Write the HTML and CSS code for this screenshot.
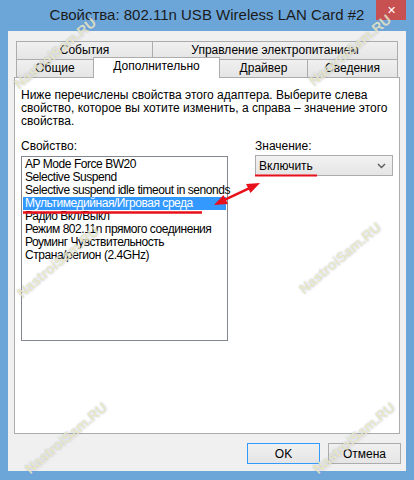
FILE: index.html
```html
<!DOCTYPE html>
<html>
<head>
    <title>Свойства: 802.11n USB Wireless LAN Card #2</title>
    <link rel="stylesheet" href="styles.css">
</head>
<body>
    <div class="window">
        <!-- Title bar -->
        <div class="titlebar">
            <span class="title">Свойства: 802.11n USB Wireless LAN Card #2</span>
            <span class="close">✕</span>
        </div>

        <div class="client">
            <!-- Tabs -->
            <div class="tabs">
                <div class="tab-row">
                    <div class="tab tab-events">События</div>
                    <div class="tab tab-power">Управление электропитанием</div>
                </div>
                <div class="tab-row front">
                    <div class="tab tab-general">Общие</div>
                    <div class="tab tab-advanced selected">Дополнительно</div>
                    <div class="tab tab-driver">Драйвер</div>
                    <div class="tab tab-info">Сведения</div>
                </div>
            </div>

            <div class="panel">
                <p class="intro">Ниже перечислены свойства этого адаптера. Выберите слева<br>свойство, которое вы хотите изменить, а справа – значение этого<br>свойства.</p>

                <div class="fields">
                    <div class="col-left">
                        <div class="label">Свойство:</div>
                        <div class="listbox">
                            <div class="item">AP Mode Force BW20</div>
                            <div class="item">Selective Suspend</div>
                            <div class="item">Selective suspend idle timeout in senonds</div>
                            <div class="item selected">Мультимедийная/Игровая среда</div>
                            <div class="item">Радио Вкл/Выкл</div>
                            <div class="item">Режим 802.11n прямого соединения</div>
                            <div class="item">Роуминг Чувствительность</div>
                            <div class="item">Страна/регион (2.4GHz)</div>
                        </div>
                    </div>
                    <div class="col-right">
                        <div class="label">Значение:</div>
                        <div class="dropdown">
                            <span>Включить</span>
                            <svg class="chevron" width="9" height="6" viewBox="0 0 9 6">
                                <polyline points="1,1 4.5,4.5 8,1" fill="none" stroke="#5a5a5a" stroke-width="1.4"/>
                            </svg>
                        </div>
                    </div>
                </div>
            </div>

            <div class="buttons">
                <button class="default">OK</button>
                <button>Отмена</button>
            </div>
        </div>

        <!-- red annotations drawn on top of the dialog -->
        <svg class="marks" width="414" height="480" viewBox="0 0 414 480">
            <line x1="23" y1="212.5" x2="202" y2="212.5" stroke="#e8101a" stroke-width="2.5"/>
            <line x1="255" y1="175.5" x2="317" y2="175.5" stroke="#e8101a" stroke-width="2"/>
            <line x1="225" y1="199.7" x2="249" y2="188.3" stroke="#e8101a" stroke-width="2.5"/>
            <polygon points="214,205 227.9,203.9 223.5,194.9" fill="#e8101a"/>
            <polygon points="260,183 250.5,193.1 246.1,184.1" fill="#e8101a"/>
        </svg>

        <!-- watermark -->
        <span class="wm wm-1">NastroiSam.RU</span>
        <span class="wm wm-2">NastroiSam.RU</span>
        <span class="wm wm-3">NastroiSam.RU</span>
        <span class="wm wm-4">NastroiSam.RU</span>
        <span class="wm wm-5">NastroiSam.RU</span>
        <span class="wm wm-6">NastroiSam.RU</span>
    </div>
</body>
</html>
```

FILE: styles.css
```css
body {
    margin: 0;
    background: #6ca6d9;
    font-family: "Liberation Sans", Arial, sans-serif;
    font-size: 12px;
    color: #000;
}

.window {
    position: relative;
    width: 414px;
    height: 480px;
    box-sizing: border-box;
    padding: 0 8px 9px;
    background: #6ca6d9;
    overflow: hidden;
}

.titlebar {
    display: flex;
    align-items: flex-start;
    height: 31px;
}

.title {
    flex: 1;
    padding-left: 30px;
    text-align: center;
    font-size: 15px;
    line-height: 30px;
    color: #1b1b1b;
}

.close {
    width: 30px;
    height: 20px;
    background: #c75050;
    color: #fff;
    font-size: 11px;
    line-height: 20px;
    text-align: center;
}

.client {
    background: #f0f0f0;
    height: 440px;
    box-sizing: border-box;
    padding: 10px 6px 7px;
}

/* tabs */
.tabs {
    margin: 0 2px;
}

.tab-row {
    display: flex;
    height: 19px;
}

.tab-row.front {
    margin-top: -1px;
}

.tab {
    box-sizing: border-box;
    height: 19px;
    border: 1px solid #acacac;
    background: linear-gradient(#f0f0f0, #e5e5e5);
    text-align: center;
    line-height: 17px;
    margin-left: -1px;
}

.tab:first-child {
    margin-left: 0;
}

.tab-events { width: 137px; }
.tab-power { flex: 1; }
.tab-general { width: 78px; }
.tab-advanced { width: 127px; }
.tab-driver { width: 89px; }
.tab-info { flex: 1; }

.tab.selected {
    position: relative;
    z-index: 1;
    height: 21px;
    margin-top: -2px;
    background: #fff;
    border-bottom: none;
    line-height: 17px;
}

.panel {
    margin-top: -1px;
    height: 357px;
    box-sizing: border-box;
    border: 1px solid #acacac;
    background: #fff;
    padding: 11px 6px;
}

.intro {
    margin: 0;
    line-height: 13px;
}

.fields {
    display: flex;
    margin-top: 12px;
}

.col-left {
    width: 207px;
}

.col-right {
    width: 138px;
    margin-left: 27px;
}

.label {
    line-height: 13px;
    height: 16px;
}

.listbox {
    box-sizing: border-box;
    height: 185px;
    border: 1px solid #828790;
    padding: 1px;
}

.item {
    line-height: 13px;
    padding-left: 2px;
    white-space: nowrap;
    letter-spacing: -0.45px;
}

.item.selected {
    background: #3399ff;
    color: #fff;
}

.dropdown {
    display: flex;
    align-items: center;
    justify-content: space-between;
    box-sizing: border-box;
    height: 21px;
    margin-top: -1px;
    border: 1px solid #acacac;
    background: linear-gradient(#f2f2f2, #e5e5e5);
    padding: 0 6px 0 3px;
}

.buttons {
    display: flex;
    justify-content: flex-end;
    gap: 8px;
    margin-top: 9px;
    margin-right: -1px;
}

button {
    width: 73px;
    height: 21px;
    border: 1px solid #acacac;
    background: linear-gradient(#f0f0f0, #e5e5e5);
    font-family: "Liberation Sans", Arial, sans-serif;
    font-size: 12px;
    padding: 0;
}

button.default {
    border-color: #3399ff;
}

.marks {
    position: absolute;
    left: 0;
    top: 0;
    pointer-events: none;
}

/* watermark */
.wm {
    position: absolute;
    font-family: "Liberation Sans", Arial, sans-serif;
    font-weight: bold;
    font-size: 14px;
    color: rgba(242, 237, 190, 0.8);
    text-shadow: 0 0 2px rgba(120, 140, 210, 0.5);
    transform: translate(-50%, -50%) rotate(-40deg);
    white-space: nowrap;
    pointer-events: none;
}

.wm-1 { left: 55px; top: 53px; }
.wm-2 { left: 350px; top: 50px; }
.wm-3 { left: 58px; top: 262px; }
.wm-4 { left: 340px; top: 258px; }
.wm-5 { left: 66px; top: 438px; }
.wm-6 { left: 354px; top: 438px; }
```
